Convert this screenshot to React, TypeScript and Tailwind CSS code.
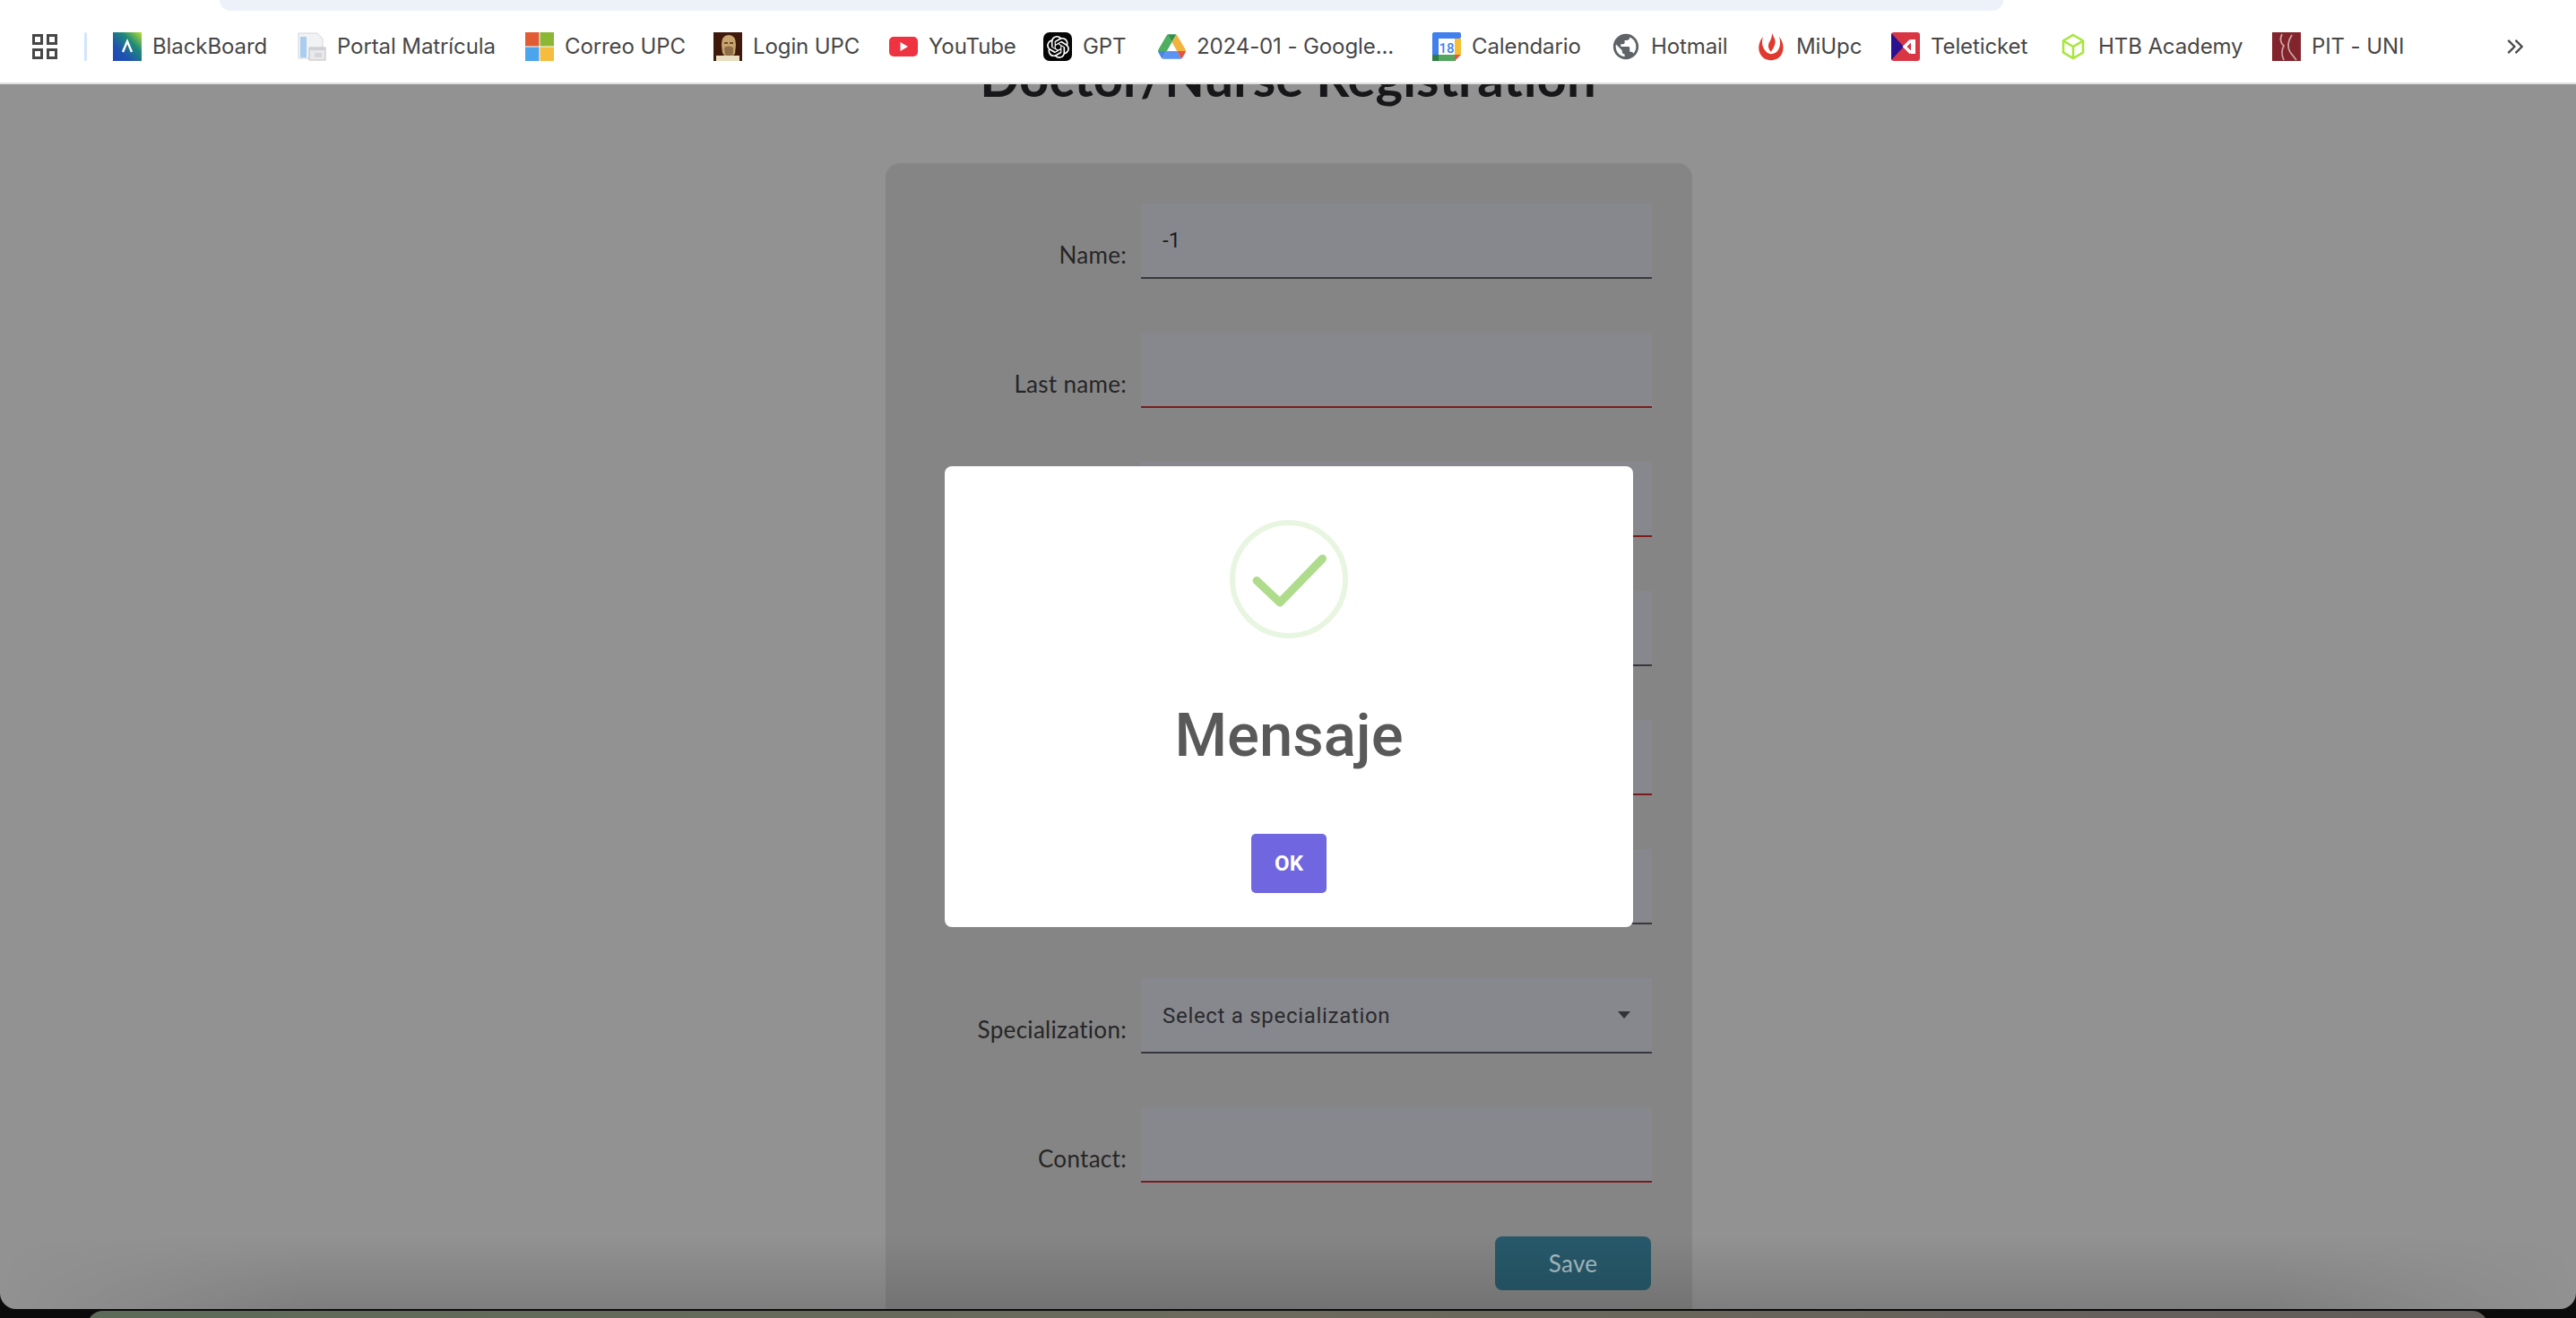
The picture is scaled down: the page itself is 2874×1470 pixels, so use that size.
import React from "react";
import { SiOpenai } from "react-icons/si";
import { MdPublic } from "react-icons/md";

const Svg = ({ children }: { children: React.ReactNode }) => (
  <svg viewBox="0 0 32 32" width="32" height="32">{children}</svg>
);

const items: { label: string; w: string; icon: React.ReactNode }[] = [
  { label: "BlackBoard", w: "w-[206px]", icon: <Svg><defs><linearGradient id="bb" x1="1" y1="0" x2="0" y2="1"><stop offset="0" stopColor="#b7e02c"/><stop offset=".35" stopColor="#1e8a78"/><stop offset=".7" stopColor="#1f52b0"/><stop offset="1" stopColor="#2148b8"/></linearGradient></defs><rect width="32" height="32" fill="url(#bb)"/><path d="M11 22 L16 10 L21 22" fill="none" stroke="#fff" strokeWidth="2.4"/></Svg> },
  { label: "Portal Matrícula", w: "w-[254px]", icon: <Svg><path d="M1 1h21l6 6v22H1z" fill="#f1f2f4" stroke="#d4d6da"/><rect x="3" y="5" width="7" height="23" fill="#a9cdef"/><rect x="13" y="17" width="18" height="14" fill="#e9e9ec" stroke="#bfc0c4"/><rect x="13" y="17" width="18" height="3" fill="#d0d1d5"/><rect x="19" y="23" width="8" height="5" fill="#d5d6da"/></Svg> },
  { label: "Correo UPC", w: "w-[210px]", icon: <Svg><rect x="0" y="0" width="15.5" height="15.5" fill="#e15b33"/><rect x="16.5" y="0" width="15.5" height="15.5" fill="#8cb735"/><rect x="0" y="16.5" width="15.5" height="15.5" fill="#4aa5ec"/><rect x="16.5" y="16.5" width="15.5" height="15.5" fill="#f6bc3e"/></Svg> },
  { label: "Login UPC", w: "w-[196px]", icon: <Svg><rect width="32" height="32" fill="#3f1a0c"/><path d="M9 14 Q9 3 17 3 Q25 3 25 14 L24 24 L21 27 H13 L10 23Z" fill="#c9a46e"/><path d="M12 17 Q17 14 22 17 L22 25 L18 28 L13 25Z" fill="#8f6f4a"/><path d="M12 12h4M18 12h4" stroke="#4a2c14" strokeWidth="1.6"/><rect x="3" y="26" width="26" height="6" fill="#eadfc0"/></Svg> },
  { label: "YouTube", w: "w-[172px]", icon: <Svg><rect x="0" y="5" width="32" height="22" rx="5" fill="#ee3240"/><path d="M12.5 11l8.5 5-8.5 5z" fill="#fff"/></Svg> },
  { label: "GPT", w: "w-[127px]", icon: <span className="flex h-[32px] w-[32px] items-center justify-center rounded-[7px] bg-[#050505] text-white"><SiOpenai size={25} /></span> },
  { label: "2024-01 - Google...", w: "w-[307px]", icon: (
    <svg viewBox="0 0 87.3 78" width="31" height="28">
      <path d="m6.6 66.85 3.85 6.65c.8 1.4 1.95 2.5 3.3 3.3l13.75-23.8h-27.5c0 1.55.4 3.1 1.2 4.5z" fill="#4a86e8"/>
      <path d="m43.65 25-13.75-23.8c-1.35.8-2.5 1.9-3.3 3.3l-25.4 44a9.06 9.06 0 0 0 -1.2 4.5h27.5z" fill="#4fae5f"/>
      <path d="m73.55 76.8c1.35-.8 2.5-1.9 3.3-3.3l1.6-2.75 7.65-13.25c.8-1.4 1.2-2.95 1.2-4.5h-27.502l5.852 11.5z" fill="#e8533f"/>
      <path d="m43.65 25 13.75-23.8c-1.35-.8-2.9-1.2-4.5-1.2h-18.5c-1.6 0-3.15.45-4.5 1.2z" fill="#2f9149"/>
      <path d="m59.8 53h-32.3l-13.75 23.8c1.35.8 2.9 1.2 4.5 1.2h50.8c1.6 0 3.15-.45 4.5-1.2z" fill="#5b93f2"/>
      <path d="m73.4 26.5-12.7-22c-.8-1.4-1.95-2.5-3.3-3.3l-13.75 23.8 16.15 28h27.45c0-1.55-.4-3.1-1.2-4.5z" fill="#f2b33d"/>
    </svg>
  ) },
  { label: "Calendario", w: "w-[200px]", icon: <Svg><rect width="32" height="32" rx="3" fill="#fff"/><rect width="32" height="7" rx="2" fill="#3f7fee"/><rect y="25" width="26" height="7" fill="#52a660"/><rect y="25" width="7" height="7" fill="#2f7d45"/><rect x="25" y="7" width="7" height="18" fill="#f6bf33"/><rect x="0" y="5" width="7" height="20" fill="#3f7fee"/><path d="M25 25h7l-7 7z" fill="#e8503f"/><text x="16" y="22.5" fontSize="15" fontWeight="500" textAnchor="middle" fill="#3f7fee" fontFamily="Roboto, sans-serif">18</text></Svg> },
  { label: "Hotmail", w: "w-[162px]", icon: <span className="text-[#5f6368]"><MdPublic size={34} /></span> },
  { label: "MiUpc", w: "w-[150px]", icon: <Svg><path d="M7 5 C0 13 1 24 8 29 C13 32 20 32 25 28 C31 23 31 12 25 5 C27 12 26 18 22 22 C18 25 13 25 10 21 C6 17 5 11 7 5Z" fill="#e0392e"/><path d="M17 1 C19 6 22 9 20 14 C19 18 17 19 16 22 C13 19 12 15 14 11 C16 8 17 5 17 1Z" fill="#e0392e"/></Svg> },
  { label: "Teleticket", w: "w-[187px]", icon: <Svg><rect width="32" height="32" rx="3" fill="#d93644"/><path d="M0 1 L14 16 L0 31Z" fill="#2b1190"/><path d="M22 8h5v16h-5z" fill="#fff"/><path d="M22 9 L15 16 L22 23" fill="none" stroke="#fff" strokeWidth="3.4"/></Svg> },
  { label: "HTB Academy", w: "w-[238px]", icon: <Svg><path d="M16 3 L27 9.5 V22.5 L16 29 L5 22.5 V9.5Z M5 9.5 L16 16 L27 9.5 M16 16 V29" fill="none" stroke="#a7e63c" strokeWidth="2.6"/></Svg> },
  { label: "PIT - UNI", w: "w-[150px]", icon: <Svg><rect width="32" height="32" fill="#81242b"/><path d="M11 2 Q7 10 13 15 Q9 22 13 31 M22 3 Q15 14 20 22 L27 31" fill="none" stroke="#c8a5a5" strokeWidth="1.8"/></Svg> },
];

const fields = [
  { label: "Name:", red: false, value: "-1" },
  { label: "Last name:", red: true },
  { label: "", red: true },
  { label: "", red: false },
  { label: "", red: true },
  { label: "", red: false },
];

function Row({ label, red, value, children }: { label: string; red?: boolean; value?: string; children?: React.ReactNode }) {
  return (
    <div className="flex items-end h-[84px] mb-[60px]">
      <div className="w-[285px] pr-[16px] pb-[11px] text-right text-[26px] tracking-[0.3px] leading-[32px] text-[#262626] whitespace-nowrap shrink-0">{label}</div>
      <div className={`relative w-[570px] h-[84px] pl-[24px] pt-[25px] bg-[#87888d] border-b-[2px] text-[24px] leading-[32px] text-[#1c1c1e] font-['Roboto',sans-serif] ${red ? "border-[#7a1c1c]" : "border-[#38383c]"}`}>
        {value}
        {children}
      </div>
    </div>
  );
}

export default function App() {
  return (
    <div className="relative h-[1470px] w-[2874px] overflow-hidden bg-[#0b0b0b] font-['Inter',sans-serif]">
      {/* window behind */}
      <div className="absolute left-[97px] right-[98px] top-[1462px] h-[20px] rounded-t-[18px] bg-gradient-to-r from-[#5c6a58] via-[#6c6a5c] to-[#625c5a]" />

      <div className="relative h-[1460px] flex flex-col overflow-hidden rounded-b-[18px] bg-[#929292]">
        <header className="relative z-10 h-[94px] shrink-0 bg-white border-b-2 border-[#e0e0e0]">
          <div className="absolute left-[245px] top-0 h-[12px] w-[1990px] rounded-b-[20px] bg-[#edf2fa]" />
          <div className="flex h-[92px] items-center pt-[12px] pl-[36px]">
            <svg viewBox="0 0 28 28" width="28" height="28" className="shrink-0">
              <g fill="none" stroke="#474747" strokeWidth="3">
                <rect x="1.5" y="1.5" width="9" height="9" />
                <rect x="17.5" y="1.5" width="9" height="9" />
                <rect x="1.5" y="17.5" width="9" height="9" />
                <rect x="17.5" y="17.5" width="9" height="9" />
              </g>
            </svg>
            <div className="ml-[30px] mr-[29px] h-[32px] w-[3px] rounded bg-[#d3e3fd] shrink-0" />
            <div className="flex items-center">
              {items.map((it) => (
                <div key={it.label} className={`flex items-center gap-[12px] shrink-0 ${it.w}`}>
                  <span className="flex h-[32px] w-[32px] items-center justify-center shrink-0">{it.icon}</span>
                  <span className="text-[24px] tracking-[-0.1px] leading-[32px] text-[#474747] whitespace-nowrap">{it.label}</span>
                </div>
              ))}
            </div>
            <svg viewBox="0 0 20 20" width="22" height="22" className="absolute left-[2795px] top-[41px]">
              <path d="M3 3.5l6.5 6.5-6.5 6.5M10.5 3.5l6.5 6.5-6.5 6.5" fill="none" stroke="#474747" strokeWidth="2" />
            </svg>
          </div>
        </header>

        <main className="relative flex-1 flex flex-col items-center">
          <h1 className="absolute top-[-38px] left-0 right-0 text-center text-[58px] leading-[60px] font-bold text-[#17171a] font-['Lato',sans-serif]">Doctor/Nurse Registration</h1>
          <div className="mt-[88px] ml-[2px] w-[900px] flex-1 rounded-t-[16px] bg-[#858585] pt-[45px] font-['Lato',sans-serif]">
            {fields.map((f, i) => (
              <Row key={i} {...f} />
            ))}
            <Row label="Specialization:">
              <span className="relative top-[1px] text-[#2a2a2e] tracking-[0.7px]">Select a specialization</span>
              <span className="absolute right-[24px] top-[37px] h-0 w-0 border-x-[7px] border-t-[8px] border-x-transparent border-t-[#333337]" />
            </Row>
            <Row label="Contact:" red />
            <div className="flex justify-end pr-[46px]">
              <button className="h-[60px] w-[174px] rounded-[8px] bg-[#27596a] text-[26px] tracking-[0.3px] text-[#a8bcc4]">Save</button>
            </div>
          </div>
          <div className="absolute bottom-0 left-0 right-0 h-[80px] bg-gradient-to-b from-transparent to-[#00000022] [mask-image:linear-gradient(to_right,transparent,black_12%,black_88%,transparent)]" />
        </main>

        {/* modal */}
        <div className="absolute left-[1054px] top-[520px] z-20 flex h-[514px] w-[768px] flex-col items-center rounded-[8px] bg-white font-['Roboto',sans-serif]">
          <svg viewBox="0 0 132 132" width="132" height="132" className="mt-[60px] shrink-0">
            <circle cx="66" cy="66" r="63" fill="none" stroke="#e8f5e0" strokeWidth="6" />
            <path d="M30 67.5 L56 92 L103.5 43" fill="none" stroke="#afdc8c" strokeWidth="9" strokeLinecap="round" strokeLinejoin="round" />
          </svg>
          <div className="mt-[63px] text-[67px] font-medium leading-[90px] text-[#595959]">Mensaje</div>
          <button className="mt-[65px] h-[66px] w-[84px] rounded-[5px] bg-[#7066e0] text-[24px] font-bold text-white">OK</button>
        </div>
      </div>
    </div>
  );
}
